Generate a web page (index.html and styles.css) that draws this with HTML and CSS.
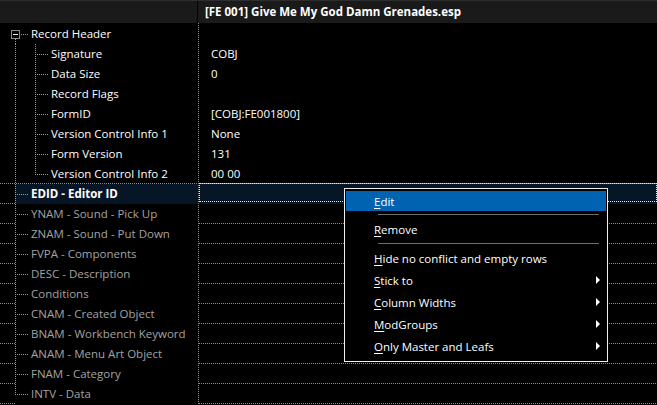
FILE: index.html
```html
<!DOCTYPE html>
<html>
<head>
<meta charset="utf-8">
<link rel="stylesheet" href="styles.css">
</head>
<body>
<div class="app">
  <div class="header">
    <div class="h1"></div>
    <div class="h2">[FE 001] Give Me My God Damn Grenades.esp</div>
  </div>
  <div class="tree">
    <div class="row"><div class="c1"><span class="g0 first"><span class="box"></span></span><span class="lbl white">Record Header</span></div><div class="c2"></div></div>
    <div class="row"><div class="c1"><span class="g0 v"></span><span class="g1 t"></span><span class="lbl white">Signature</span></div><div class="c2">COBJ</div></div>
    <div class="row"><div class="c1"><span class="g0 v"></span><span class="g1 t"></span><span class="lbl white">Data Size</span></div><div class="c2">0</div></div>
    <div class="row"><div class="c1"><span class="g0 v"></span><span class="g1 t"></span><span class="lbl white">Record Flags</span></div><div class="c2"></div></div>
    <div class="row"><div class="c1"><span class="g0 v"></span><span class="g1 t"></span><span class="lbl white">FormID</span></div><div class="c2">[COBJ:FE001800]</div></div>
    <div class="row"><div class="c1"><span class="g0 v"></span><span class="g1 t"></span><span class="lbl white">Version Control Info 1</span></div><div class="c2">None</div></div>
    <div class="row"><div class="c1"><span class="g0 v"></span><span class="g1 t"></span><span class="lbl white">Form Version</span></div><div class="c2">131</div></div>
    <div class="row glfull"><div class="c1"><span class="g0 v"></span><span class="g1 l"></span><span class="lbl white">Version Control Info 2</span></div><div class="c2">00 00</div></div>
    <div class="row gl sel"><div class="c1"><span class="g0 t"></span><span class="lbl bold">EDID - Editor ID</span></div><div class="c2"><span class="focus"></span></div></div>
    <div class="row gl"><div class="c1"><span class="g0 t"></span><span class="lbl">YNAM - Sound - Pick Up</span></div><div class="c2"></div></div>
    <div class="row gl"><div class="c1"><span class="g0 t"></span><span class="lbl">ZNAM - Sound - Put Down</span></div><div class="c2"></div></div>
    <div class="row gl"><div class="c1"><span class="g0 t"></span><span class="lbl">FVPA - Components</span></div><div class="c2"></div></div>
    <div class="row gl"><div class="c1"><span class="g0 t"></span><span class="lbl">DESC - Description</span></div><div class="c2"></div></div>
    <div class="row gl"><div class="c1"><span class="g0 t"></span><span class="lbl">Conditions</span></div><div class="c2"></div></div>
    <div class="row gl"><div class="c1"><span class="g0 t"></span><span class="lbl">CNAM - Created Object</span></div><div class="c2"></div></div>
    <div class="row gl"><div class="c1"><span class="g0 t"></span><span class="lbl">BNAM - Workbench Keyword</span></div><div class="c2"></div></div>
    <div class="row gl"><div class="c1"><span class="g0 t"></span><span class="lbl">ANAM - Menu Art Object</span></div><div class="c2"></div></div>
    <div class="row gl"><div class="c1"><span class="g0 t"></span><span class="lbl">FNAM - Category</span></div><div class="c2"></div></div>
    <div class="row gl"><div class="c1"><span class="g0 l"></span><span class="lbl">INTV - Data</span></div><div class="c2"></div></div>
  </div>

  <div class="menu">
    <div class="item hot"><span class="txt"><u>E</u>dit</span></div>
    <div class="sep"></div>
    <div class="item"><span class="txt"><u>R</u>emove</span></div>
    <div class="sep"></div>
    <div class="item"><span class="txt"><u>H</u>ide no conflict and empty rows</span></div>
    <div class="item"><span class="txt"><u>S</u>tick to</span><span class="arrow"></span></div>
    <div class="item"><span class="txt"><u>C</u>olumn Widths</span><span class="arrow"></span></div>
    <div class="item"><span class="txt"><u>M</u>odGroups</span><span class="arrow"></span></div>
    <div class="item"><span class="txt"><u>O</u>nly Master and Leafs</span><span class="arrow"></span></div>
  </div>
</div>
</body>
</html>
```

FILE: styles.css
```css
html, body {
  margin: 0;
  padding: 0;
  background: #000;
}
body {
  font-family: "Open Sans", "Noto Sans", "DejaVu Sans", sans-serif;
  font-size: 11.5px;
  color: #fff;
}
.app {
  position: relative;
  width: 657px;
  height: 405px;
  overflow: hidden;
  background: #000;
}
.header {
  display: flex;
  height: 22px;
  background: #1a1a1a;
  border-top: 1px solid #2e2e2e;
}
.h1 {
  width: 197px;
  border-right: 1px solid #050505;
}
.h2 {
  padding-left: 7px;
  font-weight: bold;
  line-height: 22px;
  color: #fff;
  white-space: nowrap;
}
.tree {
  padding-top: 1px;
  background: repeating-linear-gradient(to bottom, #8c8c8c 0 1px, transparent 1px 2px) 198px 0 / 1px 100% no-repeat;
}
.row {
  display: flex;
  height: 20px;
}
.c1 {
  width: 198px;
  display: flex;
  flex: none;
}
.c2 {
  flex: 1;
  margin-left: 1px;
  padding-left: 12px;
  line-height: 20px;
  white-space: nowrap;
  position: relative;
}
.lbl {
  line-height: 20px;
  white-space: nowrap;
  color: #a3a3a3;
}
.lbl.white { color: #fff; }
.lbl.bold { color: #fff; font-weight: bold; }

/* tree guides */
.g0 {
  display: block;
  flex: none;
  width: 31px;
  height: 20px;
}
.g1 {
  display: block;
  flex: none;
  width: 20px;
  height: 20px;
}
.g0.v {
  background: repeating-linear-gradient(to bottom, #9a9a9a 0 1px, transparent 1px 2px) 15px 0 / 1px 20px no-repeat;
}
.g0.t {
  background:
    repeating-linear-gradient(to bottom, #9a9a9a 0 1px, transparent 1px 2px) 15px 0 / 1px 20px no-repeat,
    repeating-linear-gradient(to right, #9a9a9a 0 1px, transparent 1px 2px) 17px 10px / 12px 1px no-repeat;
}
.g0.l {
  background:
    repeating-linear-gradient(to bottom, #9a9a9a 0 1px, transparent 1px 2px) 15px 0 / 1px 11px no-repeat,
    repeating-linear-gradient(to right, #9a9a9a 0 1px, transparent 1px 2px) 17px 10px / 12px 1px no-repeat;
}
.g0.first {
  background:
    repeating-linear-gradient(to bottom, #9a9a9a 0 1px, transparent 1px 2px) 15px 15px / 1px 5px no-repeat,
    repeating-linear-gradient(to right, #9a9a9a 0 1px, transparent 1px 2px) 21px 10px / 8px 1px no-repeat;
}
.g1.t {
  background:
    repeating-linear-gradient(to bottom, #9a9a9a 0 1px, transparent 1px 2px) 4px 0 / 1px 20px no-repeat,
    repeating-linear-gradient(to right, #9a9a9a 0 1px, transparent 1px 2px) 6px 10px / 12px 1px no-repeat;
}
.g1.l {
  background:
    repeating-linear-gradient(to bottom, #9a9a9a 0 1px, transparent 1px 2px) 4px 0 / 1px 11px no-repeat,
    repeating-linear-gradient(to right, #9a9a9a 0 1px, transparent 1px 2px) 6px 10px / 12px 1px no-repeat;
}
.box {
  display: block;
  margin: 6px 0 0 11px;
  width: 7px;
  height: 7px;
  border: 1px solid #8a8a8a;
  background: #000;
}
.box::before {
  content: "";
  display: block;
  margin: 3px 0 0 1px;
  width: 5px;
  height: 1px;
  background: #e8e8e8;
}

/* grid lines */
.row.gl .c1 {
  background: repeating-linear-gradient(to right, #8c8c8c 0 1px, transparent 1px 2px) 0 100% / 15px 1px no-repeat;
}
.row.glfull .c1 {
  background: repeating-linear-gradient(to right, #8c8c8c 0 1px, transparent 1px 2px) 0 100% / 198px 1px no-repeat;
}
.row.gl .c2,
.row.glfull .c2 {
  background: repeating-linear-gradient(to right, #8c8c8c 0 1px, transparent 1px 2px) 0 100% / 100% 1px no-repeat;
}
.row.sel .c1 {
  background:
    repeating-linear-gradient(to right, #8c8c8c 0 1px, transparent 1px 2px) 0 100% / 15px 1px no-repeat,
    linear-gradient(#061626, #061626) 15px 0 / 183px 100% no-repeat;
}
.row.sel .c2 {
  background: #061626;
}
.focus {
  position: absolute;
  left: 0;
  top: -1px;
  right: 0;
  height: 19px;
  border: 1px dotted #e8e8e8;
  box-sizing: border-box;
}

/* context menu */
.menu {
  position: absolute;
  left: 344px;
  top: 188px;
  width: 260px;
  padding: 2px 1px 4px 1px;
  border: 1px solid #f0f0f0;
  background: #000;
}
.item {
  display: flex;
  align-items: center;
  height: 22px;
  padding-left: 28px;
  color: #fff;
  white-space: nowrap;
}
.item.hot {
  height: 20px;
  background: #0063b1;
}
.txt u {
  text-decoration: underline;
  text-underline-offset: 2px;
}
.sep {
  height: 7px;
  margin: 0 7px 0 32px;
  background: linear-gradient(#6e6e6e, #6e6e6e) 0 3px / 100% 1px no-repeat;
}
.arrow {
  margin-left: auto;
  margin-right: 6px;
  width: 0;
  height: 0;
  border-top: 4px solid transparent;
  border-bottom: 4px solid transparent;
  border-left: 4px solid #fff;
}
```
